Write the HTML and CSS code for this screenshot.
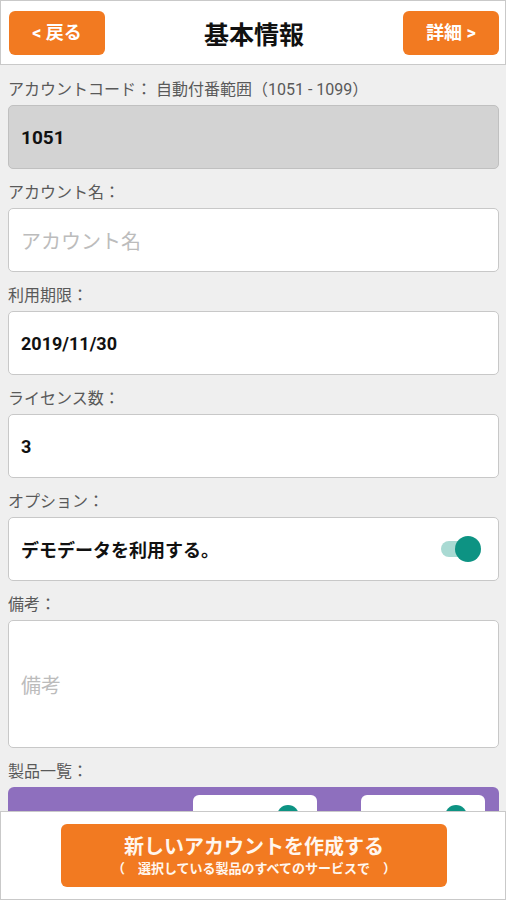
FILE: index.html
```html
<!doctype html>
<html lang="ja">

	<head>
		<meta charset="UTF-8">
		<title>基本情報</title>
		<link rel="stylesheet" href="styles.css">
	</head>

	<body>
		<div class="header">
			<a href="javascript:;" class="hbtn">&lt; 戻る</a>
			<h1 class="title">基本情報</h1>
			<a href="javascript:;" class="hbtn">詳細 &gt;</a>
		</div>

		<div class="content">
			<div class="label">アカウントコード： 自動付番範囲（1051 - 1099）</div>
			<div class="field field-gray">1051</div>

			<div class="label">アカウント名：</div>
			<div class="field field-empty">アカウント名</div>

			<div class="label">利用期限：</div>
			<div class="field">2019/11/30</div>

			<div class="label">ライセンス数：</div>
			<div class="field">3</div>

			<div class="label">オプション：</div>
			<div class="field field-switch">
				<span>デモデータを利用する。</span>
				<span class="switch"><i></i></span>
			</div>

			<div class="label">備考：</div>
			<div class="field field-empty field-area">備考</div>

			<div class="label">製品一覧：</div>
			<div class="products">
				<div class="pcard"><span class="dot"></span></div>
				<div class="pcard"><span class="dot"></span></div>
			</div>
		</div>

		<div class="footer">
			<a href="javascript:;" class="create">
				<span class="create-main">新しいアカウントを作成する</span>
				<span class="create-sub">（　選択している製品のすべてのサービスで　）</span>
			</a>
		</div>
	</body>

</html>
```

FILE: styles.css
```css
body,
h1 {
	margin: 0;
	padding: 0;
}

body {
	background-color: #efefef;
	font-family: Roboto, "Noto Sans CJK JP", sans-serif;
	height: 900px;
	overflow: hidden;
}

a {
	text-decoration: none;
}

.header {
	height: 63px;
	background-color: #ffffff;
	border: 1px solid #c9c9c9;
	display: flex;
	align-items: center;
	justify-content: space-between;
	padding: 0 6px 0 8px;
}

.hbtn {
	width: 96px;
	height: 44px;
	line-height: 44px;
	text-align: center;
	background-color: #f27a21;
	border-radius: 6px;
	color: #ffffff;
	font-size: 18px;
	font-weight: bold;
}

.title {
	font-size: 25px;
	font-weight: bold;
	color: #111111;
}

.content {
	padding: 1px 7px 0 8px;
}

.label {
	margin: 14px 0 5px;
	line-height: 20px;
	font-size: 16px;
	color: #595959;
}

.field {
	height: 62px;
	border: 1px solid #c8c8c8;
	border-radius: 5px;
	background-color: #ffffff;
	display: flex;
	align-items: center;
	padding: 0 12px;
	font-size: 18px;
	font-weight: bold;
	color: #111111;
}

.field-gray {
	background-color: #d3d3d3;
	border-color: #c0c0c0;
	font-size: 19px;
}

.field-empty {
	font-size: 20px;
	font-weight: normal;
	color: #bcbcbc;
}

.field-area {
	height: 126px;
}

.field-switch {
	justify-content: space-between;
	padding-right: 21px;
}

.switch {
	position: relative;
	width: 36px;
	height: 16px;
	border-radius: 8px;
	background-color: #a9dad3;
}

.switch i {
	position: absolute;
	right: -4px;
	top: -5px;
	width: 26px;
	height: 26px;
	border-radius: 50%;
	background-color: #0d9383;
}

.products {
	height: 120px;
	background-color: #8e6fbe;
	border-radius: 6px;
	display: flex;
	justify-content: flex-end;
	gap: 44px;
	padding: 8px 14px 0 0;
}

.pcard {
	position: relative;
	width: 124px;
	height: 80px;
	background-color: #ffffff;
	border-radius: 6px;
}

.dot {
	position: absolute;
	left: 84px;
	top: 10px;
	width: 22px;
	height: 22px;
	border-radius: 50%;
	background-color: #0d9383;
}

.footer {
	position: fixed;
	left: 0;
	right: 0;
	bottom: 0;
	height: 87px;
	background-color: #ffffff;
	border: 1px solid #c9c9c9;
	display: flex;
	justify-content: center;
}

.create {
	margin: 12px 0 0 2px;
	width: 386px;
	height: 63px;
	background-color: #f27a21;
	border-radius: 6px;
	color: #fff6ee;
	display: flex;
	flex-direction: column;
	align-items: center;
	justify-content: center;
}

.create-main {
	font-size: 20px;
	font-weight: bold;
	line-height: 26px;
}

.create-sub {
	font-size: 13px;
	font-weight: bold;
	line-height: 17px;
}
```
